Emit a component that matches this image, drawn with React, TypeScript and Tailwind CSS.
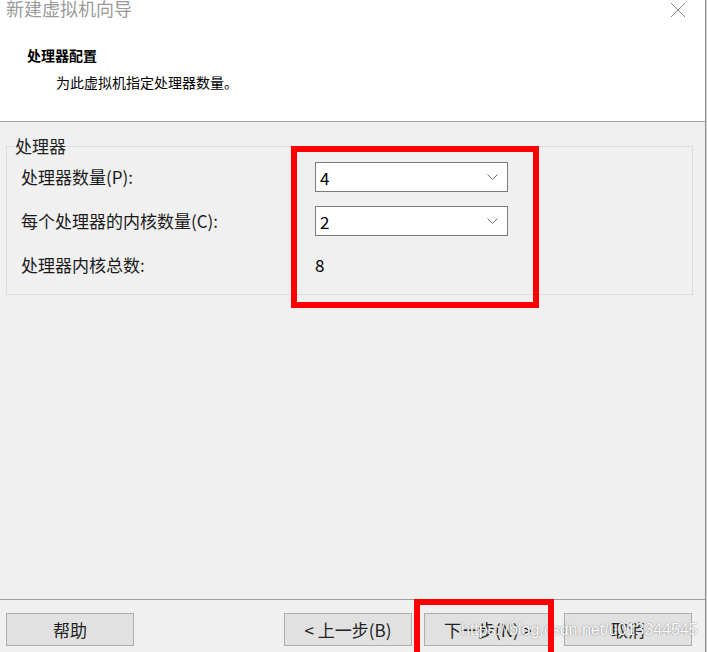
const font = { fontFamily: '"Noto Sans CJK SC", "Liberation Sans", sans-serif' };

function CloseIcon() {
  return (
    <svg width="16" height="16" viewBox="0 0 16 16" fill="none" stroke="#8a8a8a" strokeWidth="1">
      <path d="M1 1L15 15M15 1L1 15" />
    </svg>
  );
}

function Chevron() {
  return (
    <svg width="11" height="6" viewBox="0 0 11 6" fill="none" stroke="#6b6b6b" strokeWidth="1">
      <path d="M0.5 0.5L5.5 5.5L10.5 0.5" />
    </svg>
  );
}

function Select({ value }: { value: string }) {
  return (
    <div className="flex h-[30px] w-[193px] items-center justify-between border border-[#7a7a7a] bg-white pl-[4px] pr-[9px]">
      <span className="text-[17px] leading-none text-black">{value}</span>
      <Chevron />
    </div>
  );
}

function Button({ label }: { label: string }) {
  return (
    <button className="flex h-[33px] w-[128px] items-center justify-center border border-[#adadad] bg-[#e1e1e1] text-[17px] text-[#222]">
      {label}
    </button>
  );
}

export default function App() {
  return (
    <div className="relative flex h-[652px] w-[707px] overflow-hidden bg-[#f0f0f0]" style={font}>
      <div className="flex w-[705px] flex-col">
        {/* Header */}
        <div className="h-[122px] border-b border-[#a0a0a0] bg-white">
          <div className="flex h-[21px] items-start justify-between pl-[6px] pr-[19px]">
            <span className="-mt-[4px] text-[18px] leading-[24px] text-[#9a9a9a]">新建虚拟机向导</span>
            <div className="mt-[2px]">
              <CloseIcon />
            </div>
          </div>
          <div className="mt-[24px] pl-[27px] text-[14px] font-bold leading-[20px] text-black">处理器配置</div>
          <div className="mt-[7px] pl-[56px] text-[14px] leading-[20px] text-black">为此虚拟机指定处理器数量。</div>
        </div>

        {/* Body */}
        <div className="flex-1">
          <fieldset className="ml-[6px] mt-[12px] w-[687px] border border-[#dcdcdc] pb-[14px] pl-[7px]">
            <legend className="px-[1px] text-[17px] leading-[24px] text-[#222]">处理器</legend>
            <div className="ml-[7px] mt-[4px] grid grid-cols-[294px_193px] gap-y-[14px] text-[17px] text-[#1a1a1a]">
              <div className="flex h-[30px] items-center">处理器数量(P):</div>
              <Select value="4" />
              <div className="flex h-[30px] items-center">每个处理器的内核数量(C):</div>
              <Select value="2" />
              <div className="flex h-[30px] items-center">处理器内核总数:</div>
              <div className="flex h-[30px] items-center text-black">8</div>
            </div>
          </fieldset>
        </div>

        {/* Footer */}
        <div className="relative flex h-[53px] items-start border-t border-[#a0a0a0] pl-[6px] pr-[13px] pt-[13px]">
          <Button label="帮助" />
          <div className="ml-auto flex gap-[12px]">
            <Button label="< 上一步(B)" />
            <Button label="下一步(N) >" />
            <Button label="取消" />
          </div>
          <span
            className="pointer-events-none absolute left-[461px] top-[19px] text-[16px] leading-[22px] text-white"
            style={{
              fontFamily: '"Liberation Sans", sans-serif',
              textShadow: '0 0 1px rgba(0,0,0,0.45), 0 0 2px rgba(0,0,0,0.2)',
            }}
          >
            https://blog.csdn.net/u013344545
          </span>
        </div>
      </div>
      <div className="w-[2px] border-l border-[#8c8c8c] bg-[#d4d4d4]" />

      {/* Annotations */}
      <div className="absolute left-[291px] top-[146px] h-[162px] w-[248px] border-[6px] border-[#ff0000]" />
      <div className="absolute left-[414px] top-[599px] h-[60px] w-[140px] border-[6px] border-[#ff0000]" />
    </div>
  );
}
